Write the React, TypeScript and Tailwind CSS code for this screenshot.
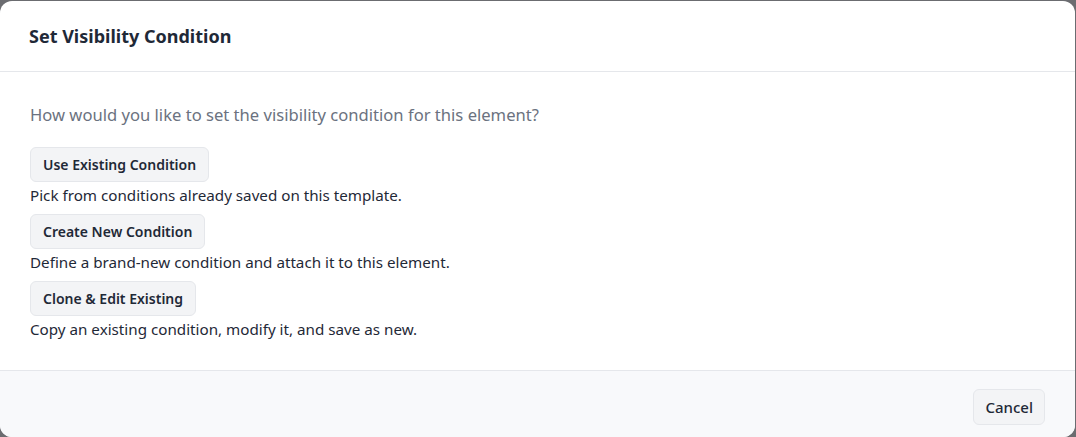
const options = [
  { label: "Use Existing Condition", hint: "Pick from conditions already saved on this template." },
  { label: "Create New Condition", hint: "Define a brand-new condition and attach it to this element." },
  { label: "Clone & Edit Existing", hint: "Copy an existing condition, modify it, and save as new." },
];

export default function App() {
  return (
    <div
      className="h-[437px] w-[1076px] overflow-hidden bg-[#6b6c70] pt-px pr-px"
      style={{ fontFamily: '"Segoe UI", "Noto Sans", sans-serif' }}
    >
      <div className="flex h-[436px] flex-col overflow-hidden rounded-xl bg-white">
        <div className="flex h-[71px] shrink-0 items-center border-b border-[#e5e7eb] px-[29px]">
          <h2 className="text-[18px] font-bold text-[#1f2937]">Set Visibility Condition</h2>
        </div>

        <div className="flex-1 px-[30px] pt-[31px]">
          <p className="mb-[19px] text-[16.6px] text-[#6b7280]">
            How would you like to set the visibility condition for this element?
          </p>
          <div className="flex flex-col gap-[8px]">
            {options.map((o) => (
              <div key={o.label} className="flex flex-col items-start gap-[3px]">
                <button className="h-[35px] rounded-md border border-[#e5e7eb] bg-[#f3f4f6] px-3 text-[14px] font-semibold text-[#1f2937]">
                  {o.label}
                </button>
                <span className="text-[15.2px] leading-[21px] text-[#1f2937]">{o.hint}</span>
              </div>
            ))}
          </div>
        </div>

        <div className="flex h-[67px] shrink-0 items-start justify-end border-t border-[#e5e7eb] bg-[#f8f9fb] pt-[18px] pr-[30px]">
          <button className="h-[36px] rounded-md border border-[#e5e7eb] bg-[#f3f4f6] px-[11px] text-[15px] font-medium text-[#1f2937]">
            Cancel
          </button>
        </div>
      </div>
    </div>
  );
}
